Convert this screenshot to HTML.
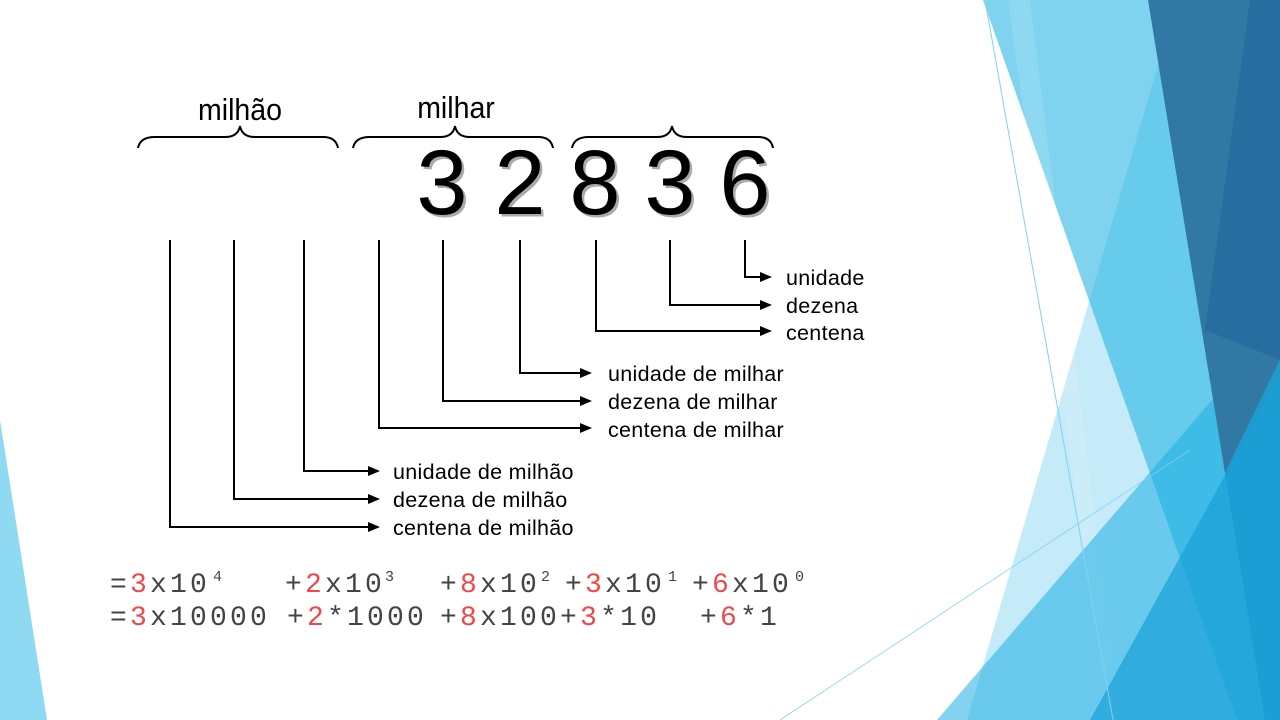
<!DOCTYPE html>
<html><head><meta charset="utf-8"><style>
html,body{margin:0;padding:0;background:#fff;width:1280px;height:720px;overflow:hidden}
svg{display:block}
.t{font-family:"Liberation Sans",sans-serif;font-size:21.5px;letter-spacing:0.3px;fill:#000}
.m{font-family:"Liberation Mono",monospace;font-size:28px;letter-spacing:3.2px;fill:#444}
.r{fill:#f04848}
.s{font-size:15px;letter-spacing:0}
.d{font-family:"Liberation Sans",sans-serif;font-size:92px}
.h{font-family:"Liberation Sans",sans-serif;font-size:31px}
</style></head><body>
<svg width="1280" height="720" viewBox="0 0 1280 720" xmlns="http://www.w3.org/2000/svg">
<polygon points="0,420 47,720 0,720" fill="#8fd9f2"/>
<polygon points="983,0 1280,0 1280,720 1237,720" fill="#7fd3ef"/>
<polygon points="1177,0 1280,0 1280,720 967,720" fill="rgba(40,180,230,0.27)"/>
<polygon points="1008,0 1030,0 1120,720 1107,720" fill="rgba(255,255,255,0.12)"/>
<polygon points="937,720 1280,321 1280,720" fill="rgba(30,175,228,0.55)"/>
<polygon points="1148,0 1280,0 1280,360 1225,473" fill="#3178a5"/>
<polygon points="1250,0 1280,0 1280,360 1205,330" fill="rgba(25,90,150,0.35)"/>
<polygon points="1225,473 1280,360 1280,720 1265,720" fill="#1e9acc"/>
<polygon points="1090,720 1280,376 1280,720" fill="rgba(25,160,215,0.7)"/>
<line x1="985" y1="0" x2="1113" y2="720" stroke="#7fd3ef" stroke-width="1"/>
<line x1="780" y1="720" x2="1190" y2="450" stroke="#7fd3ef" stroke-width="0.8"/>
<text class="h" x="240" y="120" text-anchor="middle" transform="translate(240 0) scale(0.92 1) translate(-240 0)">milhão</text>
<text class="h" x="456" y="118" text-anchor="middle" transform="translate(456 0) scale(0.92 1) translate(-456 0)">milhar</text>
<g fill="none" stroke="#000" stroke-width="2">
<path d="M138,148 Q140,137 155,137 L225,137 Q238,137 240,126 Q242,137 255,137 L323,137 Q336,137 338,148"/>
<path d="M353,148 Q355,137 370,137 L440,137 Q453,137 455,126 Q457,137 470,137 L538,137 Q551,137 553,148"/>
<path d="M572,148 Q574,137 589,137 L657,137 Q670,137 672,126 Q674,137 687,137 L758,137 Q771,137 773,148"/>
</g>
<g text-anchor="middle">
<g fill="#aaa" transform="translate(2.5 2.5)">
<text class="d" x="442" y="214">3</text><text class="d" x="520" y="214">2</text><text class="d" x="595" y="214">8</text><text class="d" x="670" y="214">3</text><text class="d" x="745" y="214">6</text>
</g>
<text class="d" x="442" y="214">3</text><text class="d" x="520" y="214">2</text><text class="d" x="595" y="214">8</text><text class="d" x="670" y="214">3</text><text class="d" x="745" y="214">6</text>
</g>
<g fill="none" stroke="#000" stroke-width="2">
<path d="M170,240 V527 H368"/><path d="M234,240 V499 H368"/><path d="M304,240 V471 H368"/>
<path d="M379,240 V428 H580"/><path d="M443,240 V401 H580"/><path d="M520,240 V373 H580"/>
<path d="M596,240 V331 H760"/><path d="M670,240 V305 H760"/><path d="M745,240 V277 H760"/>
</g>
<g fill="#000">
<polygon points="380,527 368,522 368,532"/><polygon points="380,499 368,494 368,504"/><polygon points="380,471 368,466 368,476"/>
<polygon points="592,428 580,423 580,433"/><polygon points="592,401 580,396 580,406"/><polygon points="592,373 580,368 580,378"/>
<polygon points="772,331 760,326 760,336"/><polygon points="772,305 760,300 760,310"/><polygon points="772,277 760,272 760,282"/>
</g>
<text class="t" x="786" y="285">unidade</text>
<text class="t" x="786" y="313">dezena</text>
<text class="t" x="786" y="340">centena</text>
<text class="t" x="608" y="381">unidade de milhar</text>
<text class="t" x="608" y="409">dezena de milhar</text>
<text class="t" x="608" y="437">centena de milhar</text>
<text class="t" x="393" y="479">unidade de milhão</text>
<text class="t" x="393" y="507">dezena de milhão</text>
<text class="t" x="393" y="535">centena de milhão</text>
<text class="m" x="110" y="592">=<tspan class="r">3</tspan>x10</text><text class="m s" x="213" y="581">4</text>
<text class="m" x="285" y="592">+<tspan class="r">2</tspan>x10</text><text class="m s" x="385" y="581">3</text>
<text class="m" x="440" y="592">+<tspan class="r">8</tspan>x10</text><text class="m s" x="541" y="581">2</text>
<text class="m" x="565" y="592">+<tspan class="r">3</tspan>x10</text><text class="m s" x="668" y="581">1</text>
<text class="m" x="692" y="592">+<tspan class="r">6</tspan>x10</text><text class="m s" x="795" y="581">0</text>
<text class="m" x="110" y="625">=<tspan class="r">3</tspan>x10000</text>
<text class="m" x="287" y="625">+<tspan class="r">2</tspan>*1000</text>
<text class="m" x="440" y="625">+<tspan class="r">8</tspan>x100+<tspan class="r">3</tspan>*10</text>
<text class="m" x="700" y="625">+<tspan class="r">6</tspan>*1</text>
</svg>
</body></html>
